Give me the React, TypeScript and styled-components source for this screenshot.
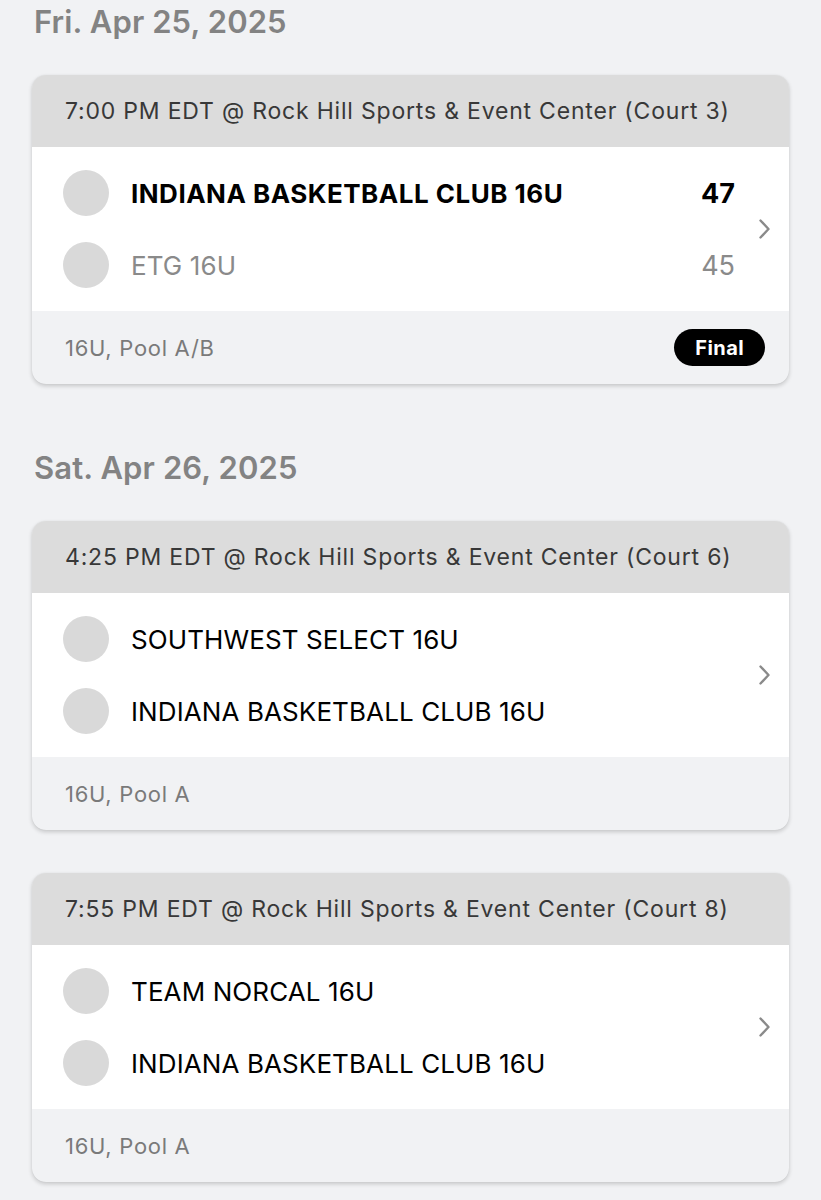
import React from "react";
import styled, { createGlobalStyle } from "styled-components";

const Global = createGlobalStyle`
  html, body { margin: 0; padding: 0; background: #f1f2f4; }
  body { font-family: Inter, "Open Sans", sans-serif; -webkit-font-smoothing: antialiased; }
`;

const Page = styled.div`
  padding: 0 32px 40px 32px;
  display: flex;
  flex-direction: column;
`;

const Section = styled.section`
  display: flex;
  flex-direction: column;
  gap: 43px;
  & + & { margin-top: 62px; }
`;

const DateHeading = styled.h2`
  margin: 0 0 -12px 2px;
  height: 44px;
  line-height: 44px;
  font-size: 31px;
  font-weight: 600;
  color: #838383;
  letter-spacing: 0.1px;
`;

const Card = styled.div`
  background: #f1f2f4;
  border-radius: 14px;
  overflow: hidden;
  box-shadow: 0 2px 4px rgba(0, 0, 0, 0.18), 0 0 1px rgba(0, 0, 0, 0.1);
`;

const CardHeader = styled.div`
  height: 72px;
  background: #dcdcdc;
  display: flex;
  align-items: center;
  padding-left: 33px;
  font-size: 23px;
  color: #383838;
  letter-spacing: 0.8px;
`;

const CardBody = styled.div`
  height: 164px;
  background: #fff;
  display: flex;
  align-items: center;
`;

const Teams = styled.div`
  flex: 1;
  display: flex;
  flex-direction: column;
  gap: 26px;
  padding-left: 31px;
`;

const TeamRow = styled.div`
  display: flex;
  align-items: center;
  height: 46px;
`;

const Logo = styled.div`
  width: 46px;
  height: 46px;
  border-radius: 50%;
  background: #d9d9d9;
  flex-shrink: 0;
  margin-right: 22px;
`;

const TeamName = styled.div<{ $tone: "win" | "lose" | "plain" }>`
  flex: 1;
  font-size: 26px;
  font-weight: ${(p) => (p.$tone === "win" ? 700 : 400)};
  color: ${(p) => (p.$tone === "lose" ? "#8a8a8a" : "#000")};
  letter-spacing: ${(p) => (p.$tone === "win" ? "0.5px" : "0.1px")};
`;

const Score = styled.div<{ $tone: "win" | "lose" | "plain" }>`
  font-size: 27px;
  font-weight: ${(p) => (p.$tone === "win" ? 700 : 400)};
  color: ${(p) => (p.$tone === "lose" ? "#8a8a8a" : "#000")};
`;

const Chevron = styled.div`
  width: 54px;
  flex-shrink: 0;
  display: flex;
  align-items: center;
  justify-content: center;
  padding-left: 6px;
  box-sizing: border-box;
`;

const CardFooter = styled.div`
  height: 73px;
  display: flex;
  align-items: center;
  justify-content: space-between;
  padding: 0 24px 0 33px;
  font-size: 22px;
  letter-spacing: 0.7px;
  color: #7a7a7a;
`;

const Badge = styled.span`
  background: #000;
  color: #fff;
  font-size: 20px;
  font-weight: 700;
  letter-spacing: 0.4px;
  border-radius: 19px;
  height: 37px;
  padding: 0 21px;
  display: flex;
  align-items: center;
`;

type Team = { name: string; score?: number; tone: "win" | "lose" | "plain" };
type Game = { header: string; teams: Team[]; footer: string; final?: boolean };

const ChevronIcon = () => (
  <svg width="14" height="22" viewBox="0 0 14 22">
    <path d="M2.5 2.5 L10.5 11 L2.5 19.5" fill="none" stroke="#8a8a8a" strokeWidth="2.4" strokeLinecap="round" strokeLinejoin="round" />
  </svg>
);

const GameCard = ({ g }: { g: Game }) => (
  <Card>
    <CardHeader>{g.header}</CardHeader>
    <CardBody>
      <Teams>
        {g.teams.map((t, i) => (
          <TeamRow key={i}>
            <Logo />
            <TeamName $tone={t.tone}>{t.name}</TeamName>
            {t.score !== undefined && <Score $tone={t.tone}>{t.score}</Score>}
          </TeamRow>
        ))}
      </Teams>
      <Chevron>
        <ChevronIcon />
      </Chevron>
    </CardBody>
    <CardFooter>
      <span>{g.footer}</span>
      {g.final && <Badge>Final</Badge>}
    </CardFooter>
  </Card>
);

const days: { date: string; games: Game[] }[] = [
  {
    date: "Fri. Apr 25, 2025",
    games: [
      {
        header: "7:00 PM EDT @ Rock Hill Sports & Event Center (Court 3)",
        teams: [
          { name: "INDIANA BASKETBALL CLUB 16U", score: 47, tone: "win" },
          { name: "ETG 16U", score: 45, tone: "lose" },
        ],
        footer: "16U, Pool A/B",
        final: true,
      },
    ],
  },
  {
    date: "Sat. Apr 26, 2025",
    games: [
      {
        header: "4:25 PM EDT @ Rock Hill Sports & Event Center (Court 6)",
        teams: [
          { name: "SOUTHWEST SELECT 16U", tone: "plain" },
          { name: "INDIANA BASKETBALL CLUB 16U", tone: "plain" },
        ],
        footer: "16U, Pool A",
      },
      {
        header: "7:55 PM EDT @ Rock Hill Sports & Event Center (Court 8)",
        teams: [
          { name: "TEAM NORCAL 16U", tone: "plain" },
          { name: "INDIANA BASKETBALL CLUB 16U", tone: "plain" },
        ],
        footer: "16U, Pool A",
      },
    ],
  },
];

export default function App() {
  return (
    <>
      <Global />
      <Page>
        {days.map((d) => (
          <Section key={d.date}>
            <DateHeading>{d.date}</DateHeading>
            {d.games.map((g) => (
              <GameCard key={g.header} g={g} />
            ))}
          </Section>
        ))}
      </Page>
    </>
  );
}
